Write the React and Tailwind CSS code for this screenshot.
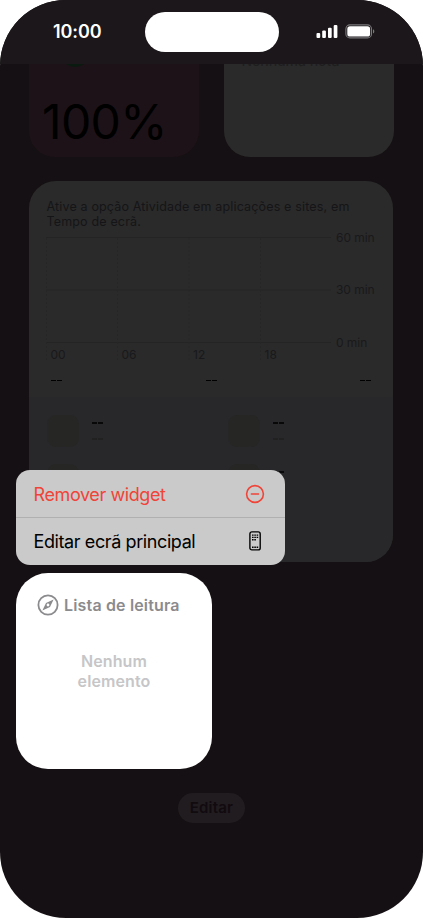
const hours = [
  { x: 17.5, label: '00' },
  { x: 88.5, label: '06' },
  { x: 160, label: '12' },
  { x: 231.5, label: '18' },
];

const levels = [
  { y: 9.5, label: '60 min' },
  { y: 62, label: '30 min' },
  { y: 114.5, label: '0 min' },
];

function StatusBar() {
  return (
    <header className="relative h-16 shrink-0 bg-[#1b171a] flex items-start justify-between pl-[53px] pr-[48px] text-white">
      <span className="mt-[18px] text-[18px] leading-7 font-semibold tracking-[-0.1px]">10:00</span>
      <div className="absolute left-[144.5px] top-3 w-[134px] h-10 rounded-full bg-white" />
      <div className="mt-6 flex items-start gap-[7px]">
        <svg width="22" height="15" viewBox="0 0 22 15" fill="currentColor">
          <rect x="0.5" y="9" width="3.7" height="5" rx="1.1" />
          <rect x="6.2" y="6.5" width="3.7" height="7.5" rx="1.1" />
          <rect x="12" y="3.7" width="3.7" height="10.3" rx="1.1" />
          <rect x="17.7" y="1" width="3.7" height="13" rx="1.1" />
        </svg>
        <svg width="30" height="15" viewBox="0 0 30 15" fill="none">
          <rect x="0.9" y="0.9" width="25.6" height="13" rx="4" stroke="#7a787a" strokeWidth="1.1" />
          <rect x="2.3" y="2.2" width="22.8" height="10.4" rx="2.7" fill="#fff" />
          <path d="M28 5.2c1.8.7 1.8 3.6 0 4.4z" fill="#7a787a" />
        </svg>
      </div>
    </header>
  );
}

function UsageChart() {
  return (
    <svg width="364" height="135" viewBox="0 0 364 135" className="block text-[12px]">
      {levels.map((level) => (
        <g key={level.label}>
          <path d={`M17 ${level.y}H302`} stroke="#242424" />
          <text x="307" y={level.y + 4.4} fill="#19191b" letterSpacing="-0.05">{level.label}</text>
        </g>
      ))}
      {hours.map((hour) => (
        <g key={hour.label}>
          <path d={`M${hour.x} 10V132`} stroke="#262626" strokeDasharray="2 2" />
          <text x={hour.x + 4} y="130.5" fill="#19191b">{hour.label}</text>
        </g>
      ))}
    </svg>
  );
}

function AppSlot() {
  return (
    <div className="flex w-[181.5px]">
      <div className="size-8 rounded-[9px] bg-[#262625]" />
      <div className="ml-[13px] flex flex-col gap-[14px] pt-[7px]">
        <Dashes className="h-[2px] bg-[#080809]" />
        <Dashes className="h-[2px] bg-[#212122]" />
      </div>
    </div>
  );
}

function Dashes({ className }) {
  return (
    <span className="flex gap-px">
      <i className={`block w-[5px] ${className}`} />
      <i className={`block w-[5px] ${className}`} />
    </span>
  );
}

function ScreenTimeWidget() {
  return (
    <section className="mt-6 w-[364px] h-[381px] rounded-[27px] bg-[#2a2a2a] overflow-hidden">
      <p className="pt-[18px] pl-[17.5px] h-[47px] text-[12.5px] leading-[15px] tracking-[0.16px] text-[#151517]">
        Ative a opção Atividade em aplicações e sites, em<br />Tempo de ecrã.
      </p>
      <UsageChart />
      <div className="flex h-[34px] justify-between pl-[22px] pr-[22px] pt-[17px]">
        <Dashes className="h-px bg-black" />
        <Dashes className="h-px bg-black" />
        <Dashes className="h-px bg-black" />
      </div>
      <div className="h-[165px] bg-[#28282a] pl-[17.5px] pt-[18px] flex flex-wrap content-start gap-y-[17px]">
        <AppSlot />
        <div className="w-[160px]"><AppSlot /></div>
        <AppSlot />
        <div className="w-[160px]"><AppSlot /></div>
      </div>
    </section>
  );
}

function ContextMenu() {
  return (
    <div className="absolute left-4 top-[470px] w-[269px] h-[94.5px] rounded-[14px] overflow-hidden bg-[#cacaca] text-[18px] tracking-[-0.4px]">
      <button className="flex w-full h-[48px] items-center justify-between pl-[17.5px] pr-5 border-b border-[#b0b0b0] text-[#f04438]">
        <span className="pt-px">Remover widget</span>
        <svg width="20" height="20" viewBox="0 0 20 20" fill="none" stroke="currentColor" strokeWidth="1.6">
          <circle cx="10" cy="10" r="8.4" />
          <path d="M6.4 10h7.2" strokeLinecap="round" />
        </svg>
      </button>
      <button className="flex w-full h-[46px] items-center justify-between pl-[17.5px] pr-6 text-black">
        <span>Editar ecrã principal</span>
        <svg width="12" height="20" viewBox="0 0 12 20" fill="none" stroke="currentColor">
          <rect x="0.9" y="0.9" width="10.3" height="18" rx="2" strokeWidth="1.4" />
          <path d="M3 4.1h6.2M3 6.4h6.2M3 8.7h4M3 16.2h6.2" strokeWidth="1.4" strokeDasharray="1.6 0.7" />
        </svg>
      </button>
    </div>
  );
}

function ReadingListWidget() {
  return (
    <div className="absolute left-4 top-[573px] size-[196px] rounded-[32px] bg-white font-semibold">
      <div className="flex items-center gap-[5px] pl-[21px] mt-[21px] h-[22px] text-[#8b8b8e] text-[16px] tracking-[0.16px]">
        <svg width="22" height="22" viewBox="0 0 22 22" fill="none">
          <circle cx="11" cy="11" r="9.6" stroke="currentColor" strokeWidth="1.8" />
          <path fillRule="evenodd" clipRule="evenodd" fill="currentColor" d="M16.6 5.4 13 13 5.4 16.6 9 9zM11 9.6a1.4 1.4 0 1 0 0 2.8 1.4 1.4 0 0 0 0-2.8z" />
        </svg>
        <span>Lista de leitura</span>
      </div>
      <p className="mt-[35px] text-center text-[16px] leading-5 tracking-[0.1px] text-[#c6c6c8]">Nenhum<br />elemento</p>
    </div>
  );
}

export default function App() {
  return (
    <div className="w-[423px] h-[918px] bg-white">
      <main className="relative h-[918px] w-[423px] overflow-hidden rounded-[66px] bg-[#151013] font-['Inter',sans-serif] flex flex-col">
        <StatusBar />
        <div className="pl-[29px] flex flex-col">
          <div className="flex gap-[25px]">
            <section className="relative w-[170px] h-[93px] rounded-b-[26px] bg-[#1d1217] overflow-hidden">
              <div className="absolute left-[31px] -top-[27px] size-[30px] rounded-full bg-[#0b1a10]" />
              <p className="pt-[29px] pl-[13px] text-[48px] leading-[58px] tracking-[-0.6px] text-black">100%</p>
            </section>
            <section className="w-[170px] h-[93px] rounded-b-[26px] bg-[#2a2a2a] overflow-hidden">
              <p className="-mt-[13px] pl-[17.5px] text-[14px] leading-5 font-medium text-[#1e1e1f]">Nenhuma nota</p>
            </section>
          </div>
          <ScreenTimeWidget />
        </div>
        <button className="mx-auto mt-[231px] w-[67px] h-[30px] shrink-0 rounded-full bg-[#211c1f] text-[15px] font-semibold tracking-[0.2px] text-[#110a0f]">Editar</button>
        <ContextMenu />
        <ReadingListWidget />
      </main>
    </div>
  );
}
